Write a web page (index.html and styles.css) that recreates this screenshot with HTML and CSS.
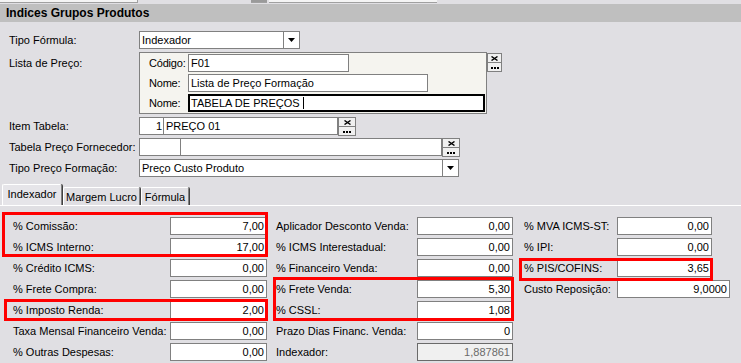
FILE: index.html
```html
<!DOCTYPE html>
<html lang="pt-BR">
<head>
    <meta charset="UTF-8">
    <title>Indices Grupos Produtos</title>
    <link rel="stylesheet" href="styles.css">
</head>
<body>
    <div class="strip">
        <span class="piece p1"></span>
        <span class="piece p2"></span>
        <span class="piece p3"></span>
    </div>
    <div class="title">Indices Grupos Produtos</div>

    <div class="head">
        <div class="row">
            <span class="lbl">Tipo Fórmula:</span>
            <div class="field combo w161">
                <span class="txt">Indexador</span>
                <span class="drop"><svg width="7" height="4" viewBox="0 0 7 4"><polygon points="0,0 7,0 3.5,4" fill="#000"/></svg></span>
            </div>
        </div>

        <div class="row tall">
            <span class="lbl">Lista de Preço:</span>
            <div class="lista">
                <div class="lrow"><span class="sl">Código:</span><div class="field w161">F01</div></div>
                <div class="lrow"><span class="sl">Nome:</span><div class="field w240">Lista de Preço Formação</div></div>
                <div class="lrow"><span class="sl">Nome:</span><div class="field focus w297">TABELA DE PREÇOS <i class="caret"></i></div></div>
            </div>
            <div class="sbtns small">
                <span class="sbtn"><svg width="7" height="5" viewBox="0 0 7 5"><path d="M0.5 0.5 L6.5 4.5 M6.5 0.5 L0.5 4.5" stroke="#000" stroke-width="1.4"/></svg></span>
                <span class="sbtn"><i class="dots"></i></span>
            </div>
        </div>

        <div class="row">
            <span class="lbl">Item Tabela:</span>
            <div class="field split w199">
                <span class="cell num w24">1</span>
                <span class="cell">PREÇO 01</span>
            </div>
            <div class="sbtns">
                <span class="sbtn"><svg width="7" height="5" viewBox="0 0 7 5"><path d="M0.5 0.5 L6.5 4.5 M6.5 0.5 L0.5 4.5" stroke="#000" stroke-width="1.4"/></svg></span>
                <span class="sbtn"><i class="dots"></i></span>
            </div>
        </div>

        <div class="row">
            <span class="lbl">Tabela Preço Fornecedor:</span>
            <div class="field split w303">
                <span class="cell num w41"></span>
                <span class="cell"></span>
            </div>
            <div class="sbtns">
                <span class="sbtn"><svg width="7" height="5" viewBox="0 0 7 5"><path d="M0.5 0.5 L6.5 4.5 M6.5 0.5 L0.5 4.5" stroke="#000" stroke-width="1.4"/></svg></span>
                <span class="sbtn"><i class="dots"></i></span>
            </div>
        </div>

        <div class="row">
            <span class="lbl">Tipo Preço Formação:</span>
            <div class="field combo w320">
                <span class="txt">Preço Custo Produto</span>
                <span class="drop"><svg width="7" height="4" viewBox="0 0 7 4"><polygon points="0,0 7,0 3.5,4" fill="#000"/></svg></span>
            </div>
        </div>
    </div>

    <div class="tabs">
        <span class="tab active t1">Indexador</span>
        <span class="tab t2">Margem Lucro</span>
        <span class="tab t3">Fórmula</span>
    </div>

    <div class="fields">
        <div class="col c1">
            <div class="grp m1">
                <div class="frow"><span class="fl">% Comissão:</span><span class="fv">7,00</span></div>
                <div class="frow"><span class="fl">% ICMS Interno:</span><span class="fv">17,00</span></div>
            </div>
            <div class="frow"><span class="fl">% Crédito ICMS:</span><span class="fv">0,00</span></div>
            <div class="frow"><span class="fl">% Frete Compra:</span><span class="fv">0,00</span></div>
            <div class="grp m2">
                <div class="frow"><span class="fl">% Imposto Renda:</span><span class="fv">2,00</span></div>
            </div>
            <div class="frow"><span class="fl">Taxa Mensal Financeiro Venda:</span><span class="fv">0,00</span></div>
            <div class="frow"><span class="fl">% Outras Despesas:</span><span class="fv">0,00</span></div>
        </div>

        <div class="col c2">
            <div class="frow"><span class="fl">Aplicador Desconto Venda:</span><span class="fv">0,00</span></div>
            <div class="frow"><span class="fl">% ICMS Interestadual:</span><span class="fv">0,00</span></div>
            <div class="frow"><span class="fl">% Financeiro Venda:</span><span class="fv">0,00</span></div>
            <div class="grp m3">
                <div class="frow"><span class="fl">% Frete Venda:</span><span class="fv">5,30</span></div>
                <div class="frow"><span class="fl">% CSSL:</span><span class="fv">1,08</span></div>
            </div>
            <div class="frow"><span class="fl">Prazo Dias Financ. Venda:</span><span class="fv">0</span></div>
            <div class="frow"><span class="fl">Indexador:</span><span class="fv ro">1,887861</span></div>
        </div>

        <div class="col c3">
            <div class="frow"><span class="fl">% MVA ICMS-ST:</span><span class="fv">0,00</span></div>
            <div class="frow"><span class="fl">% IPI:</span><span class="fv">0,00</span></div>
            <div class="grp m4">
                <div class="frow"><span class="fl">% PIS/COFINS:</span><span class="fv">3,65</span></div>
            </div>
            <div class="frow"><span class="fl">Custo Reposição:</span><span class="fv wide">9,0000</span></div>
        </div>
    </div>
</body>
</html>
```

FILE: styles.css
```css
:root {
    --bg: #e0dfe3;
    --title-bg: #bfbfbf;
    --edge: #808080;
    --panel-bg: #f5f4ef;
    --mark: #ff0000;
}

body {
    margin: 0;
    width: 741px;
    height: 363px;
    overflow: hidden;
    background-color: var(--bg);
    font-family: "Liberation Sans", Arial, sans-serif;
    font-size: 11px;
    color: #000;
}

/* bits of the controls above, cut off by the screenshot */
.strip {
    height: 4px;
    display: flex;
}

.piece {
    height: 2px;
    background: #f4f4f4;
    border-bottom: 1px solid #a0a0a0;
}

.p1 { width: 137px; border-right: 1px solid #a0a0a0; }
.p2 { width: 16px; margin-left: 113px; background: #9a9a9a; }
.p3 { width: 168px; margin-left: 2px; }

.title {
    height: 18px;
    line-height: 18px;
    background-color: var(--title-bg);
    font-weight: bold;
    font-size: 12px;
    padding-left: 6px;
}

/* upper form */
.head {
    padding: 9px 0 0 9px;
    display: flex;
    flex-direction: column;
    gap: 3px;
}

.row {
    display: flex;
    align-items: center;
    height: 18px;
}

.row.tall {
    height: 62px;
    align-items: flex-start;
}

.row.tall .lbl {
    padding-top: 5px;
}

.lbl {
    width: 130px;
    white-space: nowrap;
}

.field {
    box-sizing: border-box;
    height: 18px;
    background: #fff;
    border: 1px solid var(--edge);
    display: flex;
    align-items: center;
    padding-left: 2px;
    white-space: nowrap;
}

.field.focus {
    border: 2px solid #000;
    padding-left: 1px;
}

.caret {
    display: inline-block;
    width: 1px;
    height: 12px;
    background: #000;
    vertical-align: middle;
    margin-left: 3px;
}

.w161 { width: 161px; }
.w199 { width: 199px; }
.w240 { width: 240px; }
.w297 { width: 297px; }
.w303 { width: 303px; }
.w320 { width: 320px; }

.combo .txt {
    flex: 1;
}

.combo .drop {
    width: 15px;
    height: 100%;
    border-left: 1px solid var(--edge);
    display: flex;
    align-items: center;
    justify-content: center;
}

.field.split {
    padding-left: 0;
}

.cell {
    height: 100%;
    display: flex;
    align-items: center;
    padding-left: 2px;
}

.cell.num {
    box-sizing: border-box;
    justify-content: flex-end;
    padding: 0 1px 0 0;
    border-right: 1px solid var(--edge);
}

.w24 { width: 24px; }
.w41 { width: 41px; }

/* lista de preço box */
.lista {
    box-sizing: border-box;
    width: 348px;
    height: 62px;
    border: 1px solid var(--edge);
    background-color: var(--panel-bg);
    padding-top: 1px;
    display: flex;
    flex-direction: column;
    gap: 2px;
}

.lrow {
    display: flex;
    align-items: center;
    height: 18px;
}

.lrow .sl {
    box-sizing: border-box;
    width: 48px;
    padding-left: 9px;
    letter-spacing: -0.2px;
}

/* clear / search buttons */
.sbtns {
    display: flex;
    flex-direction: column;
    align-self: flex-start;
}

.sbtn {
    box-sizing: border-box;
    width: 18px;
    height: 10px;
    border: 1px solid var(--edge);
    background: #f0f0f0;
    display: flex;
    align-items: center;
    justify-content: center;
}

.sbtn + .sbtn {
    margin-top: -1px;
}

.sbtns.small {
    margin-top: 1px;
}

.sbtns.small .sbtn {
    width: 15px;
}

.dots {
    width: 2px;
    height: 2px;
    background: #000;
    box-shadow: 3px 0 0 #000, 6px 0 0 #000;
    margin-right: 6px;
    margin-top: 2px;
}

/* tabs */
.tabs {
    margin-top: 7px;
    height: 21px;
    padding-left: 2px;
    display: flex;
    align-items: flex-end;
    border-bottom: 1px solid #fff;
}

.tab {
    box-sizing: border-box;
    height: 18px;
    display: flex;
    align-items: center;
    justify-content: center;
    white-space: nowrap;
    border: 1px solid #fff;
    border-right-color: var(--edge);
    border-bottom: none;
    border-radius: 2px 2px 0 0;
    box-shadow: 1px 0 0 #404040;
}

.tab.active {
    height: 21px;
    padding-bottom: 2px;
    background: #e6e5e9;
}

.t1 { width: 60px; margin-right: 1px; }
.t2 { width: 77px; margin-right: 1px; }
.t3 { width: 48px; }

/* indexador fields */
.fields {
    display: flex;
    padding: 11px 0 0 13px;
}

.col {
    display: flex;
    flex-direction: column;
    gap: 3px;
}

.c1 { margin-right: 9px; }
.c2 { margin-right: 11px; }

.frow {
    display: flex;
    align-items: center;
    height: 18px;
}

.fl {
    white-space: nowrap;
}

.c1 .fl { width: 157px; }
.c2 .fl { width: 141px; }
.c3 .fl { width: 93px; }

.fv {
    box-sizing: border-box;
    height: 18px;
    line-height: 16px;
    background: #fff;
    border: 1px solid var(--edge);
    text-align: right;
    padding-right: 2px;
}

.c1 .fv { width: 97px; }
.c2 .fv { width: 96px; }
.c3 .fv { width: 95px; }
.c3 .fv.wide { width: 113px; }

.fv.ro {
    background: #f0f0f0;
    color: #6a6a6a;
    border-color: #6a6a6a;
}

/* red highlight marks drawn over the fields */
.grp {
    position: relative;
    display: flex;
    flex-direction: column;
    gap: 3px;
}

.grp::after {
    content: "";
    position: absolute;
    border: 3px solid var(--mark);
    pointer-events: none;
}

.m1::after { top: -5px; bottom: -1px; left: -11px; right: -1px; }
.m2::after { top: -2px; bottom: -2px; left: -9px; right: -1px; }
.m3::after { top: -3px; bottom: -2px; left: -3px; right: -1px; }
.m4::after { top: -1px; bottom: -4px; left: -5px; right: 17px; }
```
